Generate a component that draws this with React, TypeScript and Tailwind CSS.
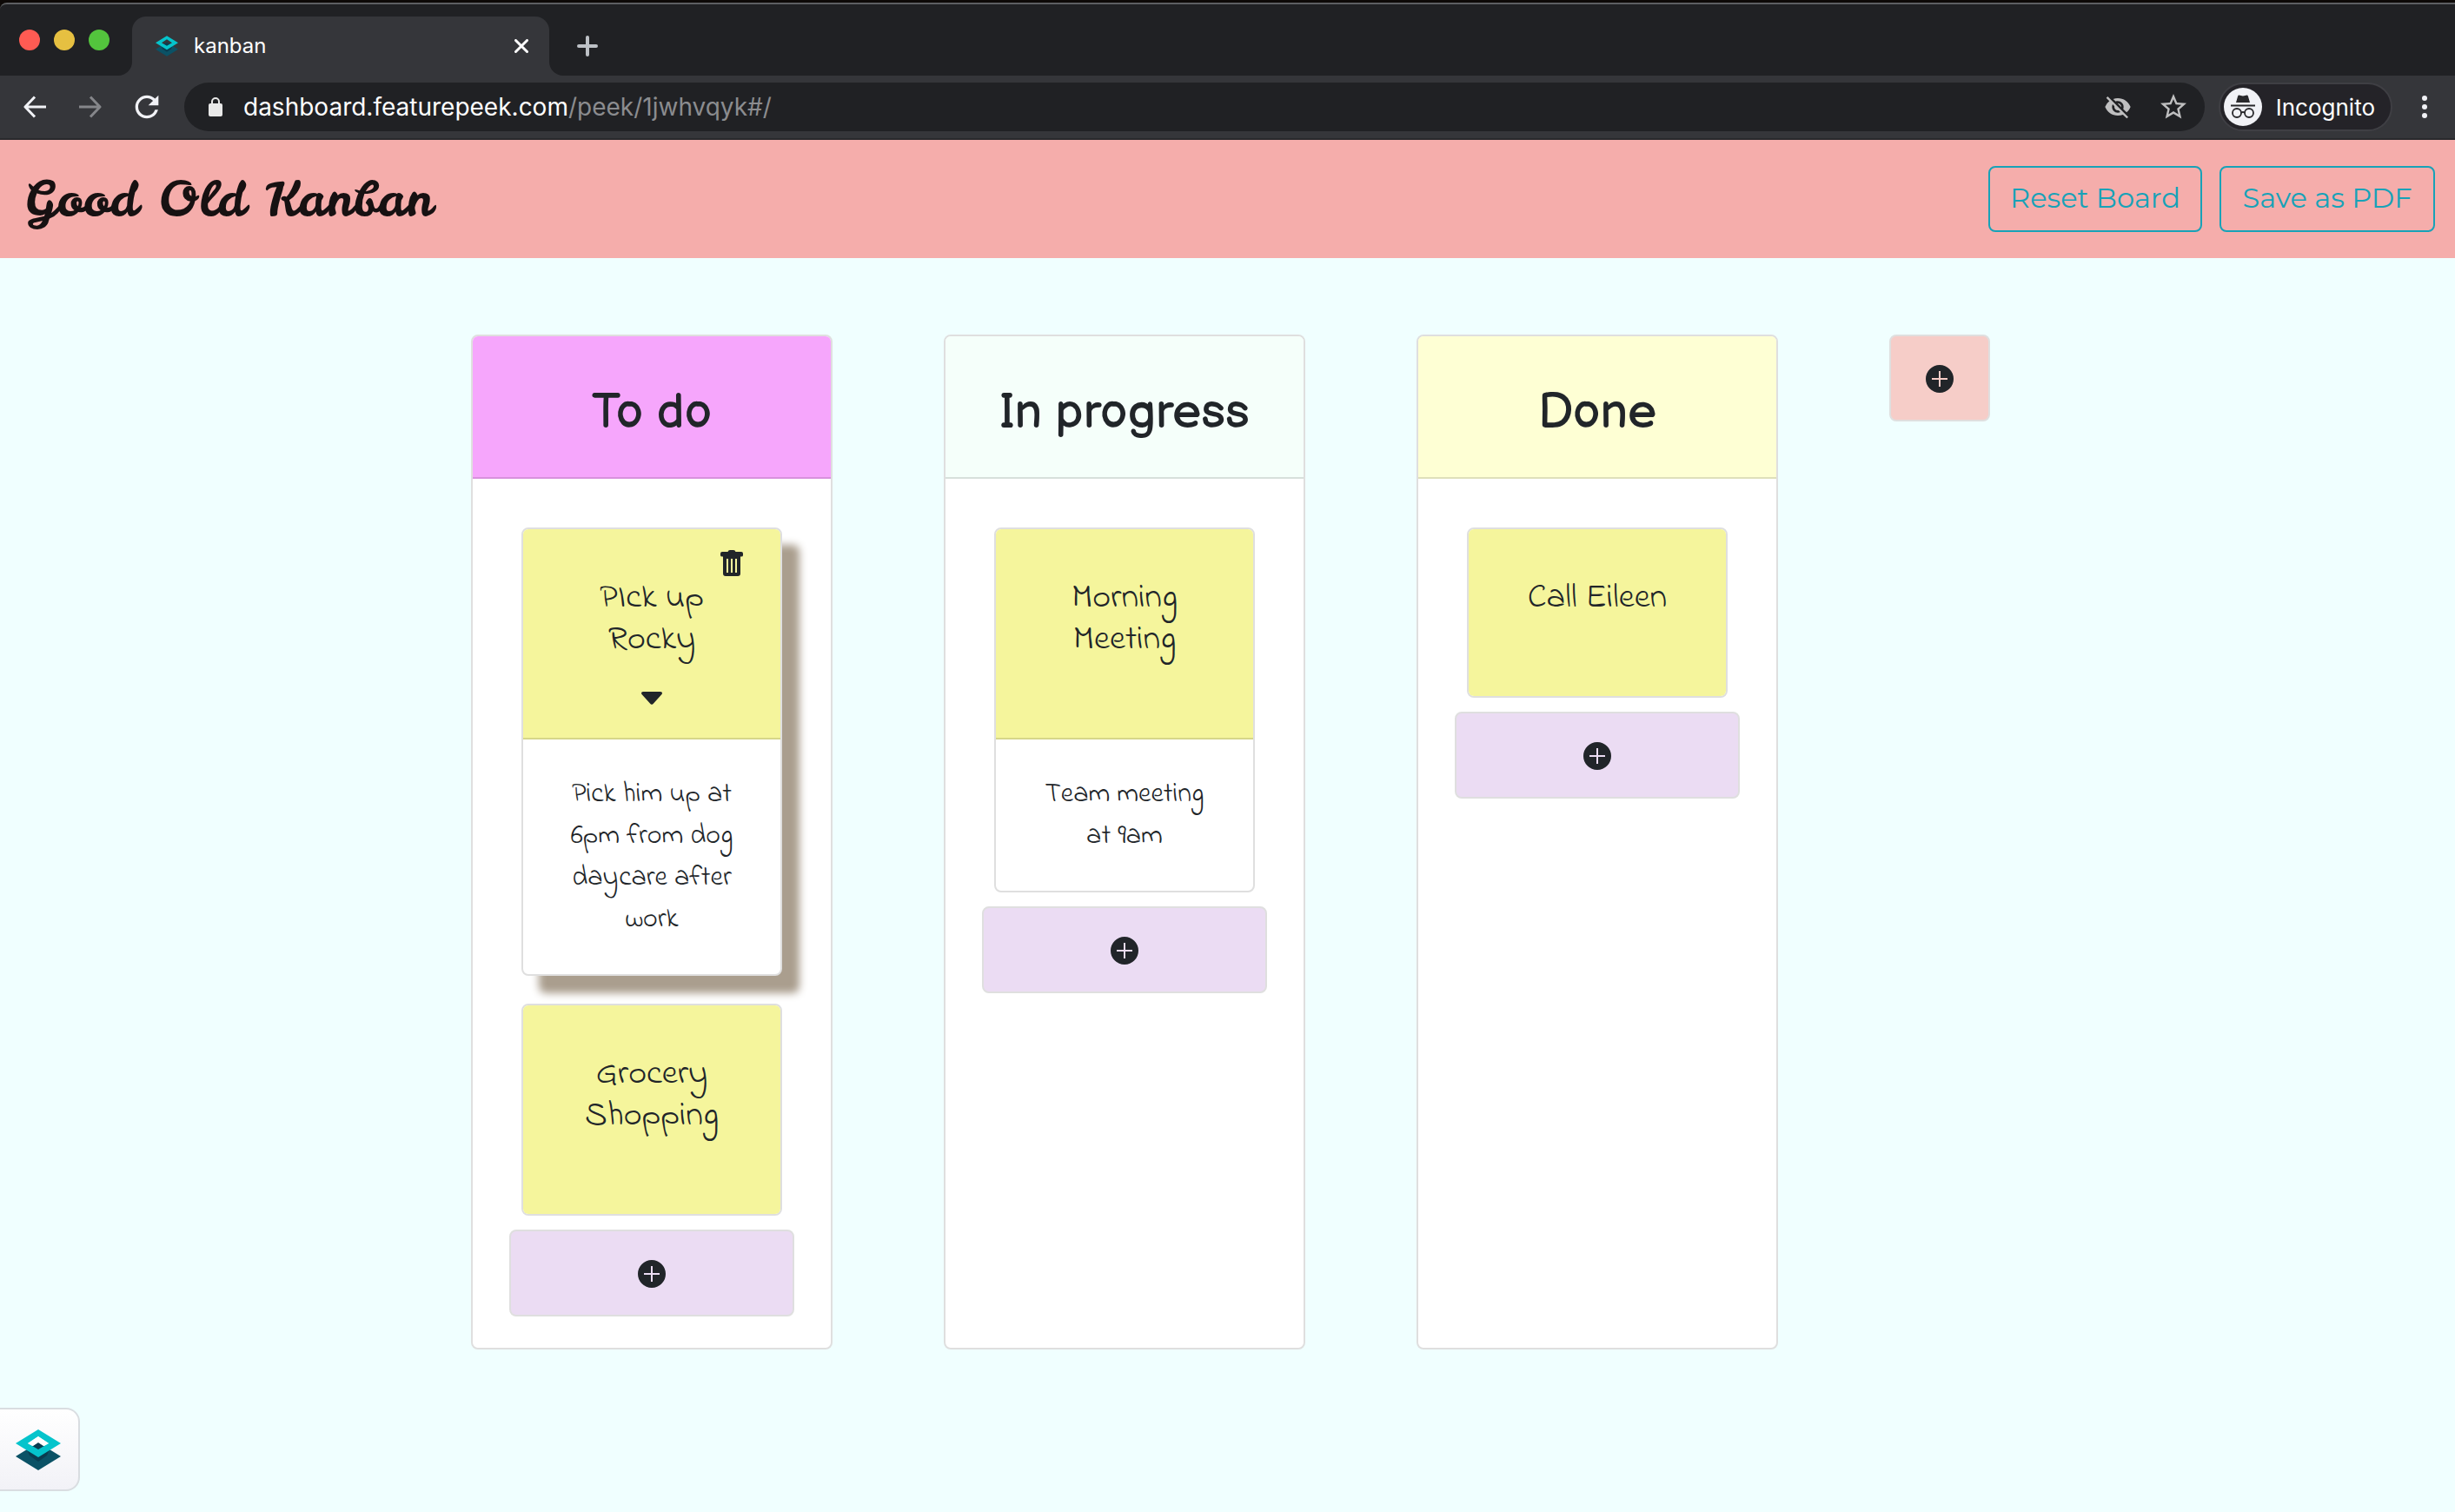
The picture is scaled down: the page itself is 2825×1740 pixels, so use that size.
import React from "react";
import { MdVisibilityOff, MdStarBorder, MdRefresh } from "react-icons/md";

type Card = { title: string; body?: string; active?: boolean };
type Column = { name: string; tone: string; cards: Card[] };

const columns: Column[] = [
  {
    name: "To do",
    tone: "bg-[#f6a6fc]",
    cards: [
      {
        title: "PIck up\nRocky",
        body: "Pick him up at\n6pm from dog\ndaycare after\nwork",
        active: true,
      },
      { title: "Grocery\nShopping" },
    ],
  },
  {
    name: "In progress",
    tone: "bg-[#f5fffa]",
    cards: [{ title: "Morning\nMeeting", body: "Team meeting\nat 9am" }],
  },
  { name: "Done", tone: "bg-[#feffd4]", cards: [{ title: "Call Eileen" }] },
];

function LayersLogo({ className, outlined }: { className: string; outlined?: boolean }) {
  return (
    <svg viewBox="0 0 52 47" className={className} aria-hidden="true">
      <path d="M26 15 52 31 26 47 0 31Z" fill="#0b5266" />
      <path d="M26 15 39 23 36 30 26 37 16 30 13 23Z" fill="#0a3d50" />
      <path
        fillRule="evenodd"
        d="M26 0 52 16 26 32 0 16ZM26 8 14 16 26 23 38 16Z"
        fill="#05c4cc"
      />
      {outlined && <path d="M26 8 38 16 32 19 26 15 20 19 14 16Z" fill="#ffffff" />}
    </svg>
  );
}

function PlusIcon() {
  return (
    <svg viewBox="0 0 32 32" className="size-8" aria-hidden="true">
      <path
        fillRule="evenodd"
        fill="#212529"
        d="M16 0a16 16 0 1 0 0 32 16 16 0 0 0 0-32ZM15 7h2v8h8v2h-8v8h-2v-8H7v-2h8Z"
      />
    </svg>
  );
}

function TrashIcon() {
  return (
    <svg viewBox="0 0 26 30" className="h-[30px] w-[26px]" aria-hidden="true">
      <path
        fillRule="evenodd"
        fill="#212529"
        d="M11 0h4q2 0 2.500 2H24q2 0 2 2v2q0 1.500-2 1.500h-1V27q0 3-3 3H6q-3 0-3-3V7.500H2Q0 7.500 0 6V4q0-2 2-2h6.500Q9 0 11 0ZM7 10v16h2V10ZM12 10v16h2V10ZM17 10v16h2V10Z"
      />
    </svg>
  );
}

function Arrow({ flip }: { flip?: boolean }) {
  return (
    <svg
      viewBox="0 0 26 26"
      className={flip ? "size-[26px] -scale-x-100 text-[#85868a]" : "size-[26px] text-[#f1f2f6]"}
      fill="none"
      stroke="currentColor"
      strokeWidth="3"
      aria-hidden="true"
    >
      <path d="M13 1.500 2 13l11 11.500M2 13h24" strokeLinejoin="round" />
    </svg>
  );
}

function BrowserChrome() {
  return (
    <div className="bg-[#0d0907] font-[Inter,sans-serif]">
      <div className="mt-[3px] overflow-hidden rounded-tl-lg border-t-2 border-[#5d5f62] bg-[#35363a]">
        <div className="flex h-[82px]">
          <div className="flex w-[152px] items-start gap-4 rounded-br-2xl bg-[#202124] pt-[29px] pl-[22px]">
            <button aria-label="Close window" className="size-6 rounded-full bg-[#ff5b53]" />
            <button aria-label="Minimize window" className="size-6 rounded-full bg-[#e6c041]" />
            <button aria-label="Zoom window" className="size-6 rounded-full bg-[#53c43d]" />
          </div>
          <div className="w-[480px] bg-[#202124] pt-[14px]">
            <div className="flex h-full items-center rounded-t-2xl bg-[#35363a] pr-6 pl-[27px]">
              <LayersLogo className="h-6 w-[26px]" />
              <span className="ml-[18px] flex-1 text-2xl text-white">kanban</span>
              <button aria-label="Close tab">
                <svg viewBox="0 0 16 16" className="size-4" aria-hidden="true">
                  <path d="m1.500 1.500 13 13m0-13-13 13" stroke="#fff" strokeWidth="3" strokeLinecap="round" />
                </svg>
              </button>
            </div>
          </div>
          <div className="flex flex-1 items-center rounded-bl-2xl bg-[#202124] pt-[14px] pl-8">
            <button aria-label="New tab">
              <svg viewBox="0 0 24 24" className="size-6" aria-hidden="true">
                <path d="M12 2v20M2 12h20" stroke="#bdc1c6" strokeWidth="4" strokeLinecap="round" />
              </svg>
            </button>
          </div>
        </div>
        <div className="flex h-[74px] items-center border-b-2 border-[#28292c] pr-8 pl-[27px]">
          <button aria-label="Back">
            <Arrow />
          </button>
          <button aria-label="Forward" className="ml-[38px]">
            <Arrow flip />
          </button>
          <button aria-label="Reload" className="ml-8">
            <MdRefresh className="size-10 text-[#f1f2f6]" />
          </button>
          <div className="ml-[23px] flex h-14 flex-1 items-center rounded-full bg-[#202124] pr-[18px] pl-7">
            <svg viewBox="0 0 16 22" className="h-[22px] w-4" aria-hidden="true">
              <rect y="7" width="16" height="15" rx="2" fill="#e8e8e8" />
              <path d="M4 8V5a4 4 0 0 1 8 0v3" fill="none" stroke="#e8e8e8" strokeWidth="2" />
            </svg>
            <div
              role="textbox"
              aria-label="Address"
              className="ml-6 flex-1 text-[28px] leading-9 text-white"
            >
              dashboard.featurepeek.com<span className="text-[#8b8c8f]">/peek/1jwhvqyk#/</span>
            </div>
            <button aria-label="Third-party cookies blocked">
              <MdVisibilityOff className="size-8 text-[#bfbfc0]" />
            </button>
            <button aria-label="Bookmark this page" className="ml-[30px]">
              <MdStarBorder className="size-9 text-[#bfbfc0]" />
            </button>
          </div>
          <button className="ml-4 flex h-14 items-center gap-4 rounded-full border-2 border-[#3f3f44] bg-[#242328] pr-[18px] pl-1 text-[26px] text-white">
            <svg viewBox="0 0 44 44" className="size-11" aria-hidden="true">
              <circle cx="22" cy="22" r="22" fill="#f1f2f6" />
              <path d="M14 17l2-7q.5-2 2.500-1.300L22 9.500l3.500-.8Q27.500 8 28 10l2 7Z" fill="#28282b" />
              <path d="M8 20.500h28" stroke="#28282b" strokeWidth="2" />
              <g fill="none" stroke="#28282b" strokeWidth="1.800">
                <circle cx="15" cy="29" r="5" />
                <circle cx="29" cy="29" r="5" />
                <path d="M20 28.500q2-1 4 0" />
              </g>
            </svg>
            Incognito
          </button>
          <button aria-label="Browser menu" className="ml-[34px]">
            <svg viewBox="0 0 6 26" className="h-[26px] w-[6px]" fill="#f1f2f6" aria-hidden="true">
              <circle cx="3" cy="3" r="3" />
              <circle cx="3" cy="13" r="3" />
              <circle cx="3" cy="23" r="3" />
            </svg>
          </button>
        </div>
      </div>
    </div>
  );
}

function CardView({ card }: { card: Card }) {
  return (
    <article
      className={
        card.active
          ? "rounded-lg border-2 border-[#dfdfdf] bg-white shadow-[20px_20px_10px_#aa9e8e]"
          : "rounded-lg border-2 border-[#dfdfdf] bg-white"
      }
    >
      <header
        className={
          card.body
            ? "relative rounded-t-md border-b-2 border-[#d6d689] bg-[#f5f59c] pt-14"
            : "relative rounded-md bg-[#f5f59c] pt-14"
        }
      >
        {card.active && (
          <button aria-label="Delete card" className="absolute top-6 right-[43px]">
            <TrashIcon />
          </button>
        )}
        <h3 className="text-[40px] leading-[48px] whitespace-pre-line">{card.title}</h3>
        <div className="flex h-[88px] items-center justify-center pb-1">
          {card.active && (
            <button aria-label="Toggle details">
              <svg viewBox="0 0 24 15" className="h-[15px] w-6" fill="#212529" aria-hidden="true">
                <path d="M2 0h20q3 .5 1.500 3L14 13.500q-2 2.500-4 0L.5 3Q-1 .5 2 0Z" />
              </svg>
            </button>
          )}
        </div>
      </header>
      {card.body && (
        <p className="pt-10 pb-[38px] text-[32px] leading-[48px] whitespace-pre-line">{card.body}</p>
      )}
    </article>
  );
}

export default function App() {
  return (
    <div className="relative flex min-h-screen flex-col bg-[#f0ffff] text-[#212529]">
      <BrowserChrome />
      <header className="flex items-center justify-between bg-[#f5adab] py-[30px] pr-[23px] pl-7">
        <h1 className="font-['Leckerli_One',Pacifico,cursive] text-[56px] leading-[76px] text-[#171112]">
          Good Old Kanban
        </h1>
        <div className="flex gap-5 font-[Montserrat,Inter,sans-serif] text-[32px] leading-[48px] text-[#17a2b8]">
          <button className="w-[246px] rounded-lg border-2 border-[#17a2b8] pt-[11px] pb-[13px]">Reset Board</button>
          <button className="w-[248px] rounded-lg border-2 border-[#17a2b8] pt-[11px] pb-[13px]">Save as PDF</button>
        </div>
      </header>
      <main className="flex justify-center gap-32 pt-[88px] pl-[7px] text-center font-['Indie_Flower',cursive]">
        {columns.map((column) => (
          <section key={column.name} className="w-[416px] rounded-lg border-2 border-[#dfdfdf] bg-white">
            <header className={`rounded-t-md border-b-2 border-black/12 bg-clip-border pt-14 pb-10 ${column.tone}`}>
              <h2 className="font-['Balsamiq_Sans',Lato,sans-serif] text-[56px] leading-[66px]">{column.name}</h2>
            </header>
            <div className="flex flex-col px-[42px] pt-14 pb-9">
              <div className="flex flex-col gap-8 px-[14px]">
                {column.cards.map((card) => (
                  <CardView key={card.title} card={card} />
                ))}
              </div>
              <button
                aria-label={`Add card to ${column.name}`}
                className="mt-4 flex h-[100px] items-center justify-center rounded-lg border-2 border-[#dfdfdf] bg-[#ebdcf3] pt-0.5"
              >
                <PlusIcon />
              </button>
            </div>
          </section>
        ))}
        <button
          aria-label="Add column"
          className="flex h-[100px] w-[116px] items-center justify-center rounded-lg border-2 border-[#dfdfdf] bg-[#f6cdc8] pt-0.5"
        >
          <PlusIcon />
        </button>
      </main>
      <button
        aria-label="Open feedback"
        className="absolute bottom-6 left-0 flex h-24 w-[92px] items-center rounded-r-2xl border-y-2 border-r-2 border-[#d9dde1] bg-linear-to-b from-white to-[#f2f2f7] pl-[18px]"
      >
        <LayersLogo className="h-[47px] w-[52px]" outlined />
      </button>
    </div>
  );
}
